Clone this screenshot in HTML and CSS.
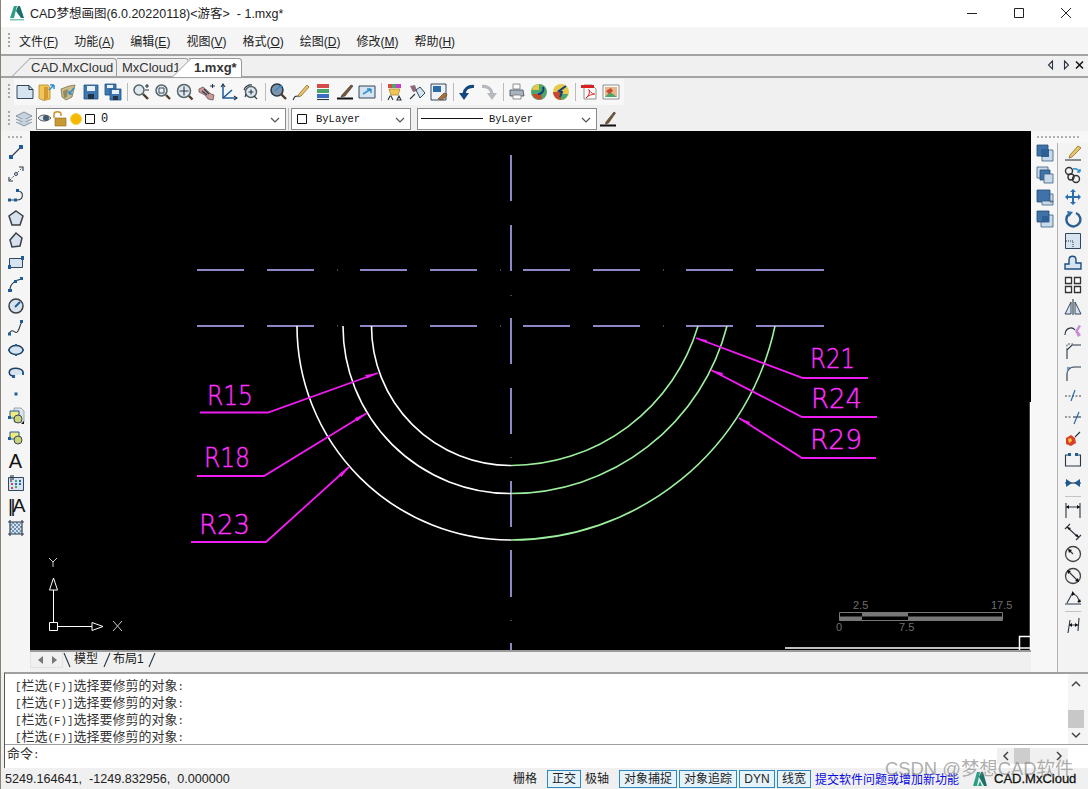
FILE: index.html
```html
<!DOCTYPE html>
<html lang="zh-CN">
<head>
<meta charset="utf-8">
<title>CAD梦想画图</title>
<link rel="stylesheet" href="styles.css">
</head>
<body>
<div class="app">
  <header class="titlebar">
    <svg class="logo" width="16" height="17" viewBox="0 0 16 17"><path class="lg" d="M1 14 5 2h3l-3 12z"/><path class="lg2" d="M7 7l2-5h2l4 12h-3z"/><path class="lg3" d="M1 15h14v1.500H1z"/></svg>
    <span class="title-text">CAD梦想画图(6.0.20220118)&lt;游客&gt;  - 1.mxg*</span>
    <div class="winbtns">
      <svg width="12" height="12" viewBox="0 0 12 12"><path class="wn" d="M1 6.500h10"/></svg>
      <svg width="12" height="12" viewBox="0 0 12 12"><path class="wn" d="M1.500 1.500h9v9h-9z"/></svg>
      <svg width="12" height="12" viewBox="0 0 12 12"><path class="wn" d="M1 1l10 10M11 1 1 11"/></svg>
    </div>
  </header>

  <nav class="menubar">
    <i class="grip-v"></i>
    <span class="menu">文件(<u>F</u>)</span><span class="menu">功能(<u>A</u>)</span><span class="menu">编辑(<u>E</u>)</span><span class="menu">视图(<u>V</u>)</span><span class="menu">格式(<u>O</u>)</span><span class="menu">绘图(<u>D</u>)</span><span class="menu">修改(<u>M</u>)</span><span class="menu">帮助(<u>H</u>)</span>
  </nav>

  <div class="tabbar">
    <div class="doc-tab t1">CAD.MxCloud</div>
    <div class="doc-tab t2">MxCloud1</div>
    <div class="doc-tab t3">1.mxg*</div>
    <div class="tab-nav">
      <svg width="38" height="12" viewBox="0 0 38 12"><path class="s" d="M6.500 2 2.500 6l4 4zM18.500 2l4 4-4 4z"/><path class="x" d="M30 2.500l7 7M37 2.500l-7 7"/></svg>
    </div>
  </div>

  <div class="toolbar row1">
    <i class="grip-v"></i>
    <div class="tools">
      <svg class="ic" viewBox="0 0 18 18"><path class="b" d="M1 2.500h12l4 4v9H1z"/><path class="s" d="M13 2.500v4h4"/></svg>
      <svg class="ic" viewBox="0 0 18 18"><path class="fo" d="M1 2h9l2 3v11l-6 1.500-5-2z"/><path class="fo2" d="M6 4h4v11l-4 2.500z"/><path class="ar" d="M11 7l5-5M16 2h-4M16 2v4"/></svg>
      <svg class="ic" viewBox="0 0 18 18"><path class="ol" d="M1 6l8-3 6-1-3 12-6 3-4-3z"/><path class="ol2" d="M3 8l5-2-1 8-3 1z"/><path class="ar" d="M14 5l-5 6M9 11h3M9 11V8"/></svg>
      <svg class="ic" viewBox="0 0 18 18"><path class="fl" d="M2 2h14v14H2z"/><path class="w" d="M5 3h8v5H5z"/><path class="bk" d="M6 11h6v5H6z"/></svg>
      <svg class="ic" viewBox="0 0 18 18"><path class="fl" d="M1 1h11v11H1z"/><path class="w" d="M3 2h6v3H3z"/><path class="fl" d="M6 6h11v11H6z"/><path class="w" d="M8 7h7v4H8z"/><path class="bk" d="M9 13h5v4H9z"/></svg>
      <i class="sep"></i>
      <svg class="ic" viewBox="0 0 18 18"><circle class="ln" cx="7" cy="7" r="5"/><path class="hd" d="M11 11l5 5"/><path class="s" d="M13 3h4M15 1v4M13 7h4"/></svg>
      <svg class="ic" viewBox="0 0 18 18"><circle class="ln" cx="7.500" cy="7.500" r="5.500"/><path class="hd" d="M12 12l4 4"/><path class="wb" d="M5 5h5v5H5z"/></svg>
      <svg class="ic" viewBox="0 0 18 18"><circle class="ln" cx="8" cy="8" r="6.500"/><path class="hd" d="M13 13l3.500 3.500"/><path class="s" d="M3.500 8h9M8 3.500v9"/></svg>
      <svg class="ic" viewBox="0 0 18 18"><path class="pk" d="M1 6l4-2 8 7 3 1-1 5-5-1-3-4-6-3z"/><path class="s" d="M4 8l5 4M6 6l5 5M12 3h5M14.500 1v4"/></svg>
      <svg class="ic" viewBox="0 0 18 18"><path class="ax" d="M3 1v14h14"/><path class="ax" d="M3 15l9-8"/><path class="s" d="M1 4l2-3 2 3M14 13l3 2-3 2"/></svg>
      <svg class="ic" viewBox="0 0 18 18"><circle class="ln" cx="9" cy="9" r="5.500"/><path class="s" d="M6.500 9h5M9 6.500v5M2 7a7 7 0 0 1 8-5M3 14l1-3M15 16l-3-3"/></svg>
      <i class="sep"></i>
      <svg class="ic" viewBox="0 0 18 18"><circle class="nv" cx="7" cy="7" r="6"/><path class="hd" d="M11 11l5 5"/><path class="ar" d="M5 8l4-4 3-1"/></svg>
      <svg class="ic" viewBox="0 0 18 18"><path class="pen" d="M7 11l8-9 2 2-8 9-3 1z"/><path class="s" d="M1 17c2-4 2-4 5-4"/></svg>
      <svg class="ic" viewBox="0 0 18 18"><path class="rr" d="M3 1h12v4H3z"/><path class="rg" d="M3 6h12v4H3z"/><path class="rb" d="M3 11h12v4H3z"/><path class="s" d="M3 16.500h12"/></svg>
      <svg class="ic" viewBox="0 0 18 18"><path class="bl" d="M1 15.500h16"/><path class="br" d="M6 12l9-10 2 1-8 10-4 1z"/></svg>
      <svg class="ic" viewBox="0 0 18 18"><path class="b" d="M1 3h16v12H1z"/><path class="ar" d="M5 11l8-5M13 6H9M13 6v4"/></svg>
      <i class="sep"></i>
      <svg class="ic" viewBox="0 0 18 18"><path class="rr" d="M2 1h4v4H2z"/><path class="rg" d="M6 1h4v4H6z"/><path class="mg" d="M10 1h5v4h-5z"/><path class="fo" d="M3 6l11 0-2 6H5z"/><path class="s" d="M2 17l2-4h1l2 4M13 13l-2 4h4z"/></svg>
      <svg class="ic" viewBox="0 0 18 18"><path class="mv" d="M2 3l5-1 2 6-4 1z"/><path class="b" d="M8 7l4-3 5 6-5 5z"/><path class="s" d="M2 16l5-5"/></svg>
      <svg class="ic" viewBox="0 0 18 18"><path class="wb" d="M1 1h15v16H1z"/><path class="nb" d="M3 3h8v6H3z"/><path class="brn" d="M8 16l6-6 3 1-1 3-4 3z"/></svg>
      <i class="sep"></i>
      <svg class="ic" viewBox="0 0 18 18"><path class="un" d="M16 3.500C10 3 6.500 6 6 11"/><path class="unh" d="M1 10h10l-5 7z"/></svg>
      <svg class="ic" viewBox="0 0 18 18"><path class="re" d="M2 3.500C8 3 11.500 6 12 11"/><path class="reh" d="M7 10h10l-5 7z"/></svg>
      <i class="sep"></i>
      <svg class="ic" viewBox="0 0 18 18"><path class="w2" d="M5 1h7v5H5z"/><path class="gr" d="M2 7h13l1 6H2z"/><path class="w2" d="M5 12h8v4H5z"/></svg>
      <svg class="ic" viewBox="0 0 18 18"><circle class="rg" cx="9" cy="9" r="8"/><path class="rr2" d="M2 11a8 8 0 0 0 10 5l-1-5z"/><path class="yl" d="M2 7a8 8 0 0 1 7-6v6z"/><path class="ar2" d="M13 4a5 5 0 0 1-5 7"/></svg>
      <svg class="ic" viewBox="0 0 18 18"><circle class="yl" cx="9" cy="9" r="8"/><path class="rr2" d="M1 9a8 8 0 0 0 8 8V9z"/><path class="rg" d="M9 17a8 8 0 0 0 7-6H9z"/><path class="ar2" d="M14 3 7 8l3 1-2 5"/></svg>
      <i class="sep"></i>
      <svg class="ic" viewBox="0 0 18 18"><path class="w2" d="M4 2h8l4 4v10H4z"/><path class="pd" d="M1 2h13v3H1z"/><path class="pdl" d="M6 15c3-2 4-6 3-8s2 4 5 4-5 0-8 4z"/></svg>
      <svg class="ic" viewBox="0 0 18 18"><path class="w2" d="M1 2h16v14H1z"/><path class="pi" d="M3 4h12v10H3z"/><path class="rg" d="M3 14l5-5 7 5z"/><path class="rr2" d="M4 8l5-3 2 3-4 3z"/></svg>
    </div>
  </div>

  <div class="toolbar row2">
    <i class="grip-v"></i>
    <svg class="ic lay" viewBox="0 0 18 18"><path class="st" d="M9 2l8 4-8 4-8-4z"/><path class="st" d="M1 9l8 4 8-4"/><path class="st" d="M1 12l8 4 8-4"/></svg>
    <div class="combo c-layer">
      <svg width="60" height="16" viewBox="0 0 60 16"><path class="ey" d="M0 7c3-4 9-4 13 0-4 4-10 4-13 0z"/><circle class="eyb" cx="8" cy="7" r="3"/><path class="lk" d="M16 7V3c0-3 7-3 7 0v2"/><path class="lkb" d="M17 7h11v8H17z"/><circle class="sun" cx="38" cy="8" r="5.500"/><path class="sq" d="M47.500 3.500h9v9h-9z"/></svg>
      <span class="combo-text t-zero">0</span>
      <svg class="chev" width="10" height="6" viewBox="0 0 10 6"><path d="M1 1l4 4 4-4"/></svg>
    </div>
    <i class="sep tall"></i>
    <div class="combo c-color">
      <svg width="12" height="12" viewBox="0 0 12 12"><path class="sq" d="M1.500 1.500h9v9h-9z"/></svg>
      <span class="combo-text t-by">ByLayer</span>
      <svg class="chev" width="10" height="6" viewBox="0 0 10 6"><path d="M1 1l4 4 4-4"/></svg>
    </div>
    <div class="combo c-line">
      <i class="hr"></i>
      <span class="combo-text t-by2">ByLayer</span>
      <svg class="chev" width="10" height="6" viewBox="0 0 10 6"><path d="M1 1l4 4 4-4"/></svg>
    </div>
    <svg class="ic lw" viewBox="0 0 18 18"><path class="bl" d="M1 15.500h16"/><path class="br" d="M7 12l8-10 1.500 1-7 10-3 1z"/></svg>
  </div>

  <main class="workspace">
    <aside class="left-bar">
      <i class="grip-h g-left"></i>
      <svg class="ic" viewBox="0 0 18 18"><path class="s" d="M4 14 14 4"/><path class="h" d="M2 12h4v4H2zM12 2h4v4h-4z"/></svg>
      <svg class="ic" viewBox="0 0 18 18"><path class="dash" d="M3 15 15 3"/><circle class="b" cx="9" cy="9" r="1.500"/><path class="s" d="M2 12v4h4M12 2h4v4"/></svg>
      <svg class="ic" viewBox="0 0 18 18"><path class="s" d="M3 13h7c7 0 7-9 1-9"/><path class="h" d="M1 11.500h3v3H1zM7 11.500h3v3H7zM9 2h3v3H9z"/></svg>
      <svg class="ic" viewBox="0 0 18 18"><path class="b2" d="M9 2l7 5-3 9H5L2 7z"/></svg>
      <svg class="ic" viewBox="0 0 18 18"><path class="b2" d="M9 2l6 5-2 8-8 1-2-7z"/></svg>
      <svg class="ic" viewBox="0 0 18 18"><path class="b" d="M2.500 5.500h13v9h-13z"/><path class="h" d="M1 12h3v4H1zM14 3h3v4h-3z"/></svg>
      <svg class="ic" viewBox="0 0 18 18"><path class="s" d="M3 15C3 9 8 5 15 4"/><path class="h" d="M1 14h4v3H1zM7 5h3v3H7zM13 2h3v3h-3z"/></svg>
      <svg class="ic" viewBox="0 0 18 18"><circle class="b2" cx="9" cy="9" r="7"/><path class="ds" d="M8 10l5-5"/></svg>
      <svg class="ic" viewBox="0 0 18 18"><path class="s" d="M2 15c4-8 6 2 9-3s1-5 4-9"/><path class="h" d="M1 13.500h3v3H1zM13 1h3v3h-3z"/></svg>
      <svg class="ic" viewBox="0 0 18 18"><ellipse class="el" cx="9" cy="9" rx="7" ry="4.500"/><path class="h" d="M8 3h2v2H8zM8 13h2v2H8zM1 8h2v2H1zM15 8h2v2h-2z"/></svg>
      <svg class="ic" viewBox="0 0 18 18"><path class="el" d="M6 13C1 12 1 7 6 5.500c5-1 11 1 10 5"/><path class="h" d="M5 12h3v3H5zM15 9h2v3h-2z"/></svg>
      <svg class="ic" viewBox="0 0 18 18"><path class="h" d="M7.500 7.500h3v3h-3z"/></svg>
      <svg class="ic" viewBox="0 0 18 18"><path class="gry" d="M7 1h7l3 3v11H7z"/><path class="yb" d="M3 4h9v7H3z"/><circle class="ci" cx="11" cy="12" r="4"/><path class="h" d="M1 9h3v3H1z"/><path class="bkf" d="M14 17l3-3v3z"/></svg>
      <svg class="ic" viewBox="0 0 18 18"><path class="yb" d="M3 3h9v7H3z"/><circle class="ci" cx="11" cy="11" r="4"/><path class="h" d="M1 8h3v3H1z"/></svg>
      <span class="ic-text">A</span>
      <svg class="ic" viewBox="0 0 18 18"><path class="b" d="M1.500 3.500h15v13h-15z"/><path class="rr" d="M4 9h2v2H4zM4 13h2v2H4z"/><path class="rg" d="M8 6h2v2H8zM8 12h2v2H8z"/><path class="nb" d="M12 6h2v2h-2zM12 9h2v2h-2zM8 9h2v2H8z"/><path class="s" d="M4 1v7M6 1v5"/></svg>
      <span class="ic-text mt">||A</span>
      <svg class="ic" viewBox="0 0 18 18"><path class="ht" d="M3 3h12v12H3z"/><path class="s" d="M3 1v16M15 1v16M1 3h16M1 15h16"/><path class="hl" d="M3 7l4-4M3 11l8-8M3 15 15 3M7 15l8-8M11 15l4-4M3 5l10 10M5 3l10 10M9 3l6 6M3 9l6 6"/></svg>
    </aside>

    <div class="center">
      <svg class="canvas" viewBox="30 131 1001 519" width="1001" height="519">
        <rect class="cad-bg" x="30" y="131" width="1001" height="519"/>
        <path class="cl" d="M197 270h47M267 270h47M360 270h47M430 270h47M523 270h47M593 270h47M686 270h47M756 270h68M197 326h47M267 326h47M360 326h47M430 326h47M523 326h47M593 326h47M686 326h47M756 326h68M511 155v46M511 225v46M511 318v46M511 388v46M511 481v46M511 550v47M511 643v7"/>
        <path class="dot" d="M337 270h1M500 270h1M663 270h1M337 326h1M500 326h1M663 326h1M511 295v1M511 457v1M511 620v1"/>
        <path class="arc-w" d="M371.500 326A139.500 139.500 0 0 0 511 465.500M343 326A167.500 167.500 0 0 0 511 493.500M297 326A214 214 0 0 0 511 540"/>
        <path class="arc-g" d="M511 465.500A195 195 0 0 0 698 326M511 493.500A223 223 0 0 0 727 326M511 540A270 270 0 0 0 775 326"/>
        <path class="ld" d="M200 412.500h68L378 373M197 476h67L367 413M191 542h75L349 467M868 378h-65L696 338M877 417h-75L711 370M876 458h-74L739 418"/>
        <path class="ah" d="M378 373l-13 2 2 3.500zM367 413l-12 5 2 3.500zM349 467l-10 7 2.500 3zM696 338l11 2-1 3zM711 370l12 3-1 3.500zM739 418l11 4-1.500 3z"/>
        <text class="cad-t" x="207" y="404.500" textLength="46" lengthAdjust="spacingAndGlyphs">R15</text>
        <text class="cad-t" x="204" y="467" textLength="46" lengthAdjust="spacingAndGlyphs">R18</text>
        <text class="cad-t" x="199" y="533.500" textLength="51" lengthAdjust="spacingAndGlyphs">R23</text>
        <text class="cad-t" x="810" y="368" textLength="45" lengthAdjust="spacingAndGlyphs">R21</text>
        <text class="cad-t" x="811" y="408" textLength="51" lengthAdjust="spacingAndGlyphs">R24</text>
        <text class="cad-t" x="810" y="449" textLength="52" lengthAdjust="spacingAndGlyphs">R29</text>
        <path class="axis" d="M49.500 622.500h8v8h-8zM53.500 622v-32M58 626.500h34M53.500 578l-4 12h8zM92 622.500l11 4-11 4z"/>
        <path class="axis ax-l" d="M49 558l4 4 4-4M53 562v5M113 621l9 10M122 621l-9 10"/>
        <path class="sb" d="M839.500 612.500h163v8h-163z"/>
        <path class="sf" d="M862 613h46v3.500h-46zM839.500 616.500H862v4h-22.500zM908 616.500h94v4h-94z"/>
        <text class="sc-t" x="853" y="609">2.5</text>
        <text class="sc-t" x="991" y="609">17.5</text>
        <text class="sc-t" x="836" y="631">0</text>
        <text class="sc-t" x="899" y="631">7.5</text>
        <path class="corner" d="M785 648h246M1019.500 650v-13.500h11v13.500M1030.500 402v236"/>
      </svg>
      <div class="sheet-tabs">
        <div class="sheet-nav">
          <svg width="30" height="12" viewBox="0 0 30 12"><path class="nav-a" d="M12 2 7 6l5 4zM21 2l5 4-5 4z"/></svg>
        </div>
        <svg class="sheet-sl" width="10" height="16" viewBox="0 0 10 16"><path class="s" d="M1 1l6 14"/></svg>
        <span class="sheet">模型</span>
        <svg class="sheet-sl sl2" width="10" height="16" viewBox="0 0 10 16"><path class="s" d="M8 1 2 15"/></svg>
        <span class="sheet">布局1</span>
        <svg class="sheet-sl sl3" width="10" height="16" viewBox="0 0 10 16"><path class="s" d="M8 1 2 15"/></svg>
      </div>
    </div>

    <aside class="right-bar">
      <i class="grip-h g-right"></i>
      <div class="right-cols">
        <div class="col-a">
          <svg class="ic" viewBox="0 0 18 18"><path class="d1" d="M1 1h11v11H1z"/><path class="d2" d="M6 6h11v11H6z"/><path class="d3" d="M5 5h8v8H5z"/></svg>
          <svg class="ic" viewBox="0 0 18 18"><path class="d2" d="M1 1h11v11H1z"/><path class="d1" d="M4 4h10v10H4z"/><path class="d2" d="M8 8h9v9H8z"/></svg>
          <svg class="ic" viewBox="0 0 18 18"><path class="d1" d="M1 2h13v12H1z"/><path class="d2" d="M6 13h11v4H6zM14 6h3v8h-3z"/></svg>
          <svg class="ic" viewBox="0 0 18 18"><path class="d2" d="M5 5h12v12H5z"/><path class="d1" d="M1 1h12v11H1z"/><path class="d3" d="M6 6h7v6H6z"/></svg>
        </div>
        <div class="col-b">
          <svg class="ic" viewBox="0 0 18 18"><path class="pen" d="M6 11l8-9 3 2-9 9-3 1z"/><path class="s" d="M1 16h16"/></svg>
          <svg class="ic" viewBox="0 0 18 18"><circle class="s2" cx="5" cy="5" r="3.500"/><circle class="s2" cx="12" cy="13" r="3.500"/><circle class="s2" cx="7" cy="11" r="3"/><path class="ar" d="M9 3c3-1 5 0 7 3M16 6V3M16 6h-3"/></svg>
          <svg class="ic" viewBox="0 0 18 18"><path class="mvb" d="M9 1l3 3h-2v4h4V6l3 3-3 3v-2h-4v4h2l-3 3-3-3h2v-4H4v2L1 9l3-3v2h4V4H6z"/></svg>
          <svg class="ic" viewBox="0 0 18 18"><path class="rot" d="M5 4a7 7 0 1 0 7-1"/><path class="mvb" d="M3 1l6 1-4 5z"/></svg>
          <svg class="ic" viewBox="0 0 18 18"><path class="b" d="M1.500 1.500h15v15h-15z"/><path class="wdash" d="M2 9h7v7"/></svg>
          <svg class="ic" viewBox="0 0 18 18"><path class="off" d="M1 15V10h4V6c0-5 7-5 7 0v3h5v6z"/></svg>
          <svg class="ic" viewBox="0 0 18 18"><path class="s3" d="M1.500 1.500h6v6h-6zM10.500 1.500h6v6h-6zM1.500 10.500h6v6h-6zM10.500 10.500h6v6h-6z"/></svg>
          <svg class="ic" viewBox="0 0 18 18"><path class="s" d="M9 1v16"/><path class="b" d="M7 4v12H1zM11 4v12h6z"/></svg>
          <svg class="ic" viewBox="0 0 18 18"><path class="s" d="M1 15c0-7 7-9 10-5"/><path class="mg2" d="M11 11l4-6 2 1-3 5 3 4-3 2z"/></svg>
          <svg class="ic" viewBox="0 0 18 18"><path class="s" d="M3 17V8l5-5h9"/><path class="dash" d="M3 8V2h6"/></svg>
          <svg class="ic" viewBox="0 0 18 18"><path class="s" d="M3 17v-7c0-4 3-7 7-7h7"/><path class="arcb" d="M3 9V3h6C6 3 4 5 3 9z"/></svg>
          <svg class="ic" viewBox="0 0 18 18"><path class="dash2" d="M1 10h16"/><path class="bl2" d="M7 15l4-11"/></svg>
          <svg class="ic" viewBox="0 0 18 18"><path class="dash2" d="M1 9h7"/><path class="s" d="M9 9h8"/><path class="bl2" d="M10 16l5-12"/></svg>
          <svg class="ic" viewBox="0 0 18 18"><path class="ex1" d="M2 8l5-3 4 3 1 5-5 3-5-2z"/><path class="ex2" d="M4 9l3-1 1 3-3 2z"/><path class="s" d="M11 7l5-5"/></svg>
          <svg class="ic" viewBox="0 0 18 18"><path class="s" d="M5 3H1.500v11h15V3H13"/><path class="h" d="M4 1h3v3H4zM11 1h3v3h-3z"/></svg>
          <svg class="ic" viewBox="0 0 18 18"><path class="s" d="M1 9h16"/><path class="bkf2" d="M2 5l6 4-6 4zM16 5l-6 4 6 4z"/></svg>
          <i class="div-h"></i>
          <svg class="ic" viewBox="0 0 18 18"><path class="s" d="M2 2v15M16 2v15M2 6h14"/><path class="bkf" d="M2 6l3-2v4zM16 6l-3-2v4z"/></svg>
          <svg class="ic" viewBox="0 0 18 18"><path class="s" d="M1 6l5-5M12 17l5-5M3 4l12 11"/><path class="bkf" d="M3 4l4 1-2 2zM15 14l-4-1 2-2z"/></svg>
          <svg class="ic" viewBox="0 0 18 18"><circle class="gc" cx="9" cy="9" r="7.500"/><path class="s" d="M9 9 5 5"/><path class="bkf" d="M4 4l4 1-3 3z"/></svg>
          <svg class="ic" viewBox="0 0 18 18"><circle class="gc" cx="9" cy="9" r="7.500"/><path class="s" d="M5 5l8 8"/><path class="bkf" d="M3 3l4 1-3 3zM15 15l-4-1 3-3z"/></svg>
          <svg class="ic" viewBox="0 0 18 18"><path class="s" d="M1 15h16M3 14 9 3M9 5c4 1 6 4 6 9"/><path class="bkf" d="M8 2l3 3-3 2zM13 13l4 0-1-3z"/></svg>
          <i class="div-h"></i>
          <svg class="ic" viewBox="0 0 18 18"><path class="s" d="M4 17 6 4M14 15l1-13M5 9h9"/><path class="bkf" d="M5 9l3-2v4zM14 9l-3-2v4z"/></svg>
        </div>
      </div>
    </aside>
  </main>

  <section class="command">
    <div class="cmd-main">
      <div class="cmd-log">
        <p class="log-line"><b>[</b>栏选<b>(F)]</b>选择要修剪的对象<b>:</b></p>
        <p class="log-line"><b>[</b>栏选<b>(F)]</b>选择要修剪的对象<b>:</b></p>
        <p class="log-line"><b>[</b>栏选<b>(F)]</b>选择要修剪的对象<b>:</b></p>
        <p class="log-line"><b>[</b>栏选<b>(F)]</b>选择要修剪的对象<b>:</b></p>
      </div>
      <div class="vscroll">
        <svg width="10" height="7" viewBox="0 0 10 7"><path class="sa" d="M1 6l4-4 4 4"/></svg>
        <i class="vthumb"></i>
        <svg width="10" height="7" viewBox="0 0 10 7"><path class="sa" d="M1 1l4 4 4-4"/></svg>
      </div>
    </div>
    <div class="cmd-input">
      <span>命令<b>:</b></span>
      <div class="hscroll">
        <svg width="7" height="10" viewBox="0 0 7 10"><path class="sa" d="M6 1 2 5l4 4"/></svg>
        <i class="hthumb"></i>
        <svg width="7" height="10" viewBox="0 0 7 10"><path class="sa" d="M1 1l4 4-4 4"/></svg>
      </div>
    </div>
  </section>

  <footer class="status">
    <span class="coords">5249.164641,&nbsp; -1249.832956,&nbsp; 0.000000</span>
    <span class="st-btn plain">栅格</span>
    <span class="st-btn on w34">正交</span>
    <span class="st-btn plain">极轴</span>
    <span class="st-btn on w58">对象捕捉</span>
    <span class="st-btn on w58">对象追踪</span>
    <span class="st-btn on w36">DYN</span>
    <span class="st-btn on w34">线宽</span>
    <a class="link">提交软件问题或增加新功能</a>
    <svg class="logo-s" width="18" height="17" viewBox="0 0 16 17"><path class="lg" d="M1 16 5 2h3L5 16z"/><path class="lg2" d="M7 7l2-5h2l4 14h-3z"/><path class="lg" d="M6 16l2-5 2 5z"/></svg>
    <span class="brand">CAD.MxCloud</span>
    <span class="watermark">CSDN @梦想CAD软件</span>
  </footer>
</div>
</body>
</html>
```
FILE: styles.css
```css
* { box-sizing: border-box; }
html, body { margin: 0; padding: 0; background: #f0f0f0; }
body { font-family: "Liberation Sans", "Noto Sans CJK SC", sans-serif; font-size: 12px; color: #1a1a1a; }
i { display: block; }
svg { display: block; flex: none; }
.app { width: 1088px; height: 789px; display: flex; flex-direction: column; border-left: 1px solid #8b8176; overflow: hidden; }

/* title */
.titlebar { height: 27px; flex: none; background: #fff; display: flex; align-items: center; padding: 0 0 3px 8px; }
.title-text { margin-left: 5px; font-size: 12.500px; color: #222; white-space: pre; }
.winbtns { margin-left: auto; display: flex; gap: 35px; padding-right: 16px; padding-top: 1px; }
.wn { fill: none; stroke: #222; stroke-width: 1; }
.lg { fill: #2f9e86; }
.lg2 { fill: #1d6f6a; }
.lg3 { fill: #7cc7b8; }

/* menu */
.menubar { height: 27px; flex: none; background: #f5f5f5; display: flex; align-items: center; padding-left: 7px; }
.grip-v { width: 2px; height: 16px; flex: none; margin-right: 1px; background: repeating-linear-gradient(to bottom, #a8a8a8 0 2px, transparent 2px 4px); }
.menu { font-size: 12px; padding: 0 8px; white-space: nowrap; color: #222; }

/* doc tabs */
.tabbar { height: 24px; flex: none; background: #f0f0f0; border-top: 2px solid #a3a3a3; border-bottom: 2px solid #a3a3a3; display: flex; align-items: flex-end; position: relative; padding-left: 28px; }
.doc-tab { height: 18px; line-height: 17px; font-size: 13px; position: relative; border-top: 1px solid #999; border-right: 1px solid #999; border-radius: 0 4px 0 0; color: #333; }
.doc-tab::before { content: ""; position: absolute; top: -1px; bottom: 0; left: -17px; width: 20px; border-top: 1px solid #999; border-left: 1px solid #999; transform: skewX(-45deg); transform-origin: bottom left; background: inherit; z-index: -1; }
.t1 { width: 88px; background: #f0f0f0; padding-left: 2px; z-index: 1; }
.t2 { width: 72px; background: #f0f0f0; padding-left: 5px; z-index: 2; }
.t2::before { display: none; }
.t3 { width: 53px; background: #fff; font-weight: 700; padding-left: 5px; z-index: 3; height: 19px; margin-bottom: -1px; }
.tab-nav { position: absolute; right: 4px; top: 3px; }
.x { fill: none; stroke: #111; stroke-width: 1.500; }

/* toolbars */
.toolbar { flex: none; display: flex; align-items: center; background: #f0f0f0; padding-left: 7px; }
.row1 { height: 28px; }
.row2 { height: 25px; }
.grip-v + .tools { margin-left: 3px; }
.tools { display: flex; align-items: center; height: 26px; background: #f7f7f7; padding-right: 2px; }
.tools .ic { margin: 0 2px; }
.ic { width: 18px; height: 18px; }
.sep { width: 1px; height: 18px; margin: 0 2.500px; background: #bbb; flex: none; }
.sep.tall { height: 22px; margin: 0 2px; }
.lay { margin-left: 4px; margin-right: 3px; }
.combo { height: 22px; background: #fff; border: 1px solid #8a8a8a; display: flex; align-items: center; position: relative; flex: none; }
.c-layer { width: 250px; padding-left: 1px; }
.c-color { width: 120px; padding-left: 4px; }
.c-line { width: 180px; padding-left: 3px; margin-left: 6px; }
.combo-text { font-family: "Liberation Mono", monospace; font-size: 10.500px; color: #111; }
.t-zero { margin-left: 3px; font-size: 12px; }
.t-by { margin-left: 8px; }
.t-by2 { margin-left: 6px; }
.hr { width: 62px; height: 1px; background: #111; flex: none; }
.chev { position: absolute; right: 5px; top: 8px; }
.chev path { fill: none; stroke: #555; stroke-width: 1.200; }
.lw { margin-left: 2px; }

/* icon parts */
.s { fill: none; stroke: #2a3644; stroke-width: 1.100; }
.s2 { fill: none; stroke: #333; stroke-width: 1.400; }
.s3 { fill: #fff; stroke: #333; stroke-width: 1.300; }
.b { fill: #d6e4f1; stroke: #33475c; stroke-width: 1; }
.b2 { fill: #d8e2ec; stroke: #3a3f48; stroke-width: 1.500; }
.h { fill: #1f5c9a; }
.hl { fill: none; stroke: #2a5f90; stroke-width: .6; }
.dash { fill: none; stroke: #555; stroke-width: 1; stroke-dasharray: 2 1.500; }
.dash2 { fill: none; stroke: #444; stroke-width: 1.100; stroke-dasharray: 2 1.500; }
.wdash { fill: none; stroke: #333; stroke-dasharray: 1 1; }
.ds { fill: none; stroke: #1f5c9a; stroke-width: 2; }
.el { fill: #d6e4f1; stroke: #1f3f5f; stroke-width: 1.500; }
.fo { fill: #f0c65a; stroke: #b08a2c; stroke-width: .8; }
.fo2 { fill: #d49a30; }
.ol { fill: #c9bb8a; stroke: #7b7350; stroke-width: .8; }
.ol2 { fill: #8f8a60; }
.ar { fill: none; stroke: #2f8fd0; stroke-width: 1.500; }
.ar2 { fill: none; stroke: #123f78; stroke-width: 2; }
.fl { fill: #3e78b2; stroke: #22517f; stroke-width: .8; }
.w { fill: #e9f1f8; }
.w2 { fill: #fbfbfb; stroke: #777; stroke-width: .8; }
.wb { fill: #eef2f6; stroke: #34495e; stroke-width: 1; }
.bk { fill: #234; }
.bkf { fill: #111; }
.bkf2 { fill: #1c5a90; }
.ln { fill: #dfe8f0; stroke: #566; stroke-width: 1.500; }
.nv { fill: #7f93a8; stroke: #2a3644; stroke-width: 1.500; }
.hd { fill: none; stroke: #4a3b2c; stroke-width: 2.400; }
.pk { fill: #c99b98; stroke: #6d5050; stroke-width: .8; }
.ax { fill: none; stroke: #1f5c9a; stroke-width: 1.500; }
.pen { fill: #e9c46a; stroke: #8a6d24; stroke-width: .8; }
.rr { fill: #d84a4a; }
.rr2 { fill: #c94a2a; }
.rg { fill: #4ca56b; }
.rb { fill: #3a6fc0; }
.yl { fill: #e6c84a; }
.mg { fill: #c83ac8; }
.mg2 { fill: #c78bd8; }
.nb { fill: #2a6aa8; }
.bl { fill: none; stroke: #111; stroke-width: 2; }
.br { fill: #7a5a34; stroke: #2a2a2a; stroke-width: .6; }
.brn { fill: #a5703a; stroke: #5c3c1c; stroke-width: .6; }
.mv { fill: #8d6a78; }
.un { fill: none; stroke: #14467f; stroke-width: 3.200; }
.unh { fill: #14467f; }
.re { fill: none; stroke: #b5b8bc; stroke-width: 3.200; }
.reh { fill: #b5b8bc; }
.gr { fill: #a9b4c0; stroke: #3f4c5a; stroke-width: .8; }
.pd { fill: #d9201f; }
.pdl { fill: none; stroke: #d9201f; stroke-width: 1; }
.pi { fill: #e8b48a; }
.st { fill: #c6d2de; stroke: #6d7d8d; stroke-width: .8; }
.ey { fill: #dce6ef; stroke: #333; stroke-width: .8; }
.eyb { fill: #445a70; }
.lk { fill: none; stroke: #c9952a; stroke-width: 1.500; }
.lkb { fill: #c99a34; stroke: #8a6a1c; stroke-width: .6; }
.sun { fill: #f6b800; stroke: #f3d54e; stroke-width: 1; }
.sq { fill: #fff; stroke: #111; stroke-width: 1; }
.gry { fill: #dde3ea; stroke: #8a96a3; stroke-width: .8; }
.yb { fill: #f3ea7d; stroke: #1f5c9a; stroke-width: 1; }
.ci { fill: #c9d47a; stroke: #3d4b5a; stroke-width: 1; }
.ht { fill: #d6e0ea; }
.ic-text { width: 18px; height: 22px; line-height: 22px; text-align: center; font-size: 20px; color: #111; }
.ic-text.mt { letter-spacing: -2.500px; white-space: nowrap; font-size: 19px; }

/* workspace */
.workspace { height: 541px; flex: none; display: flex; }
.left-bar { width: 29px; flex: none; background: #f5f5f5; display: flex; flex-direction: column; align-items: center; gap: 4px; padding-top: 3px; }
.left-bar .ic-text { margin-top: -1px; margin-bottom: -2px; }
.grip-h { height: 2px; background: repeating-linear-gradient(to right, #b0b0b0 0 2px, transparent 2px 4px); flex: none; }
.g-left { width: 16px; margin-top: 2px; margin-bottom: 1px; }
.center { width: 1001px; flex: none; display: flex; flex-direction: column; }
.canvas { flex: none; }
.cad-bg { fill: #000; }
.cl { fill: none; stroke: #8d87c6; stroke-width: 2; }
.dot { fill: none; stroke: #8d87c6; stroke-width: 1; }
.arc-w { fill: none; stroke: #fff; stroke-width: 1.600; }
.arc-g { fill: none; stroke: #9df09d; stroke-width: 1.600; }
.ld { fill: none; stroke: #f01cf0; stroke-width: 1.800; }
.ah { fill: #f01cf0; }
.cad-t { font-family: "DejaVu Sans", sans-serif; font-weight: 200; font-size: 27px; fill: #ff30ff; stroke: #ff30ff; stroke-width: .4; }
.axis { fill: none; stroke: #fff; stroke-width: 1; }
.ax-l { stroke: #ccc; }
.sb { fill: none; stroke: #777; stroke-width: 1; }
.sf { fill: #777; }
.sc-t { font-family: "Liberation Sans", sans-serif; font-size: 11px; fill: #6f6f6f; }
.corner { fill: none; stroke: #fff; stroke-width: 1.500; }
.sheet-tabs { height: 20px; flex: none; background: #f0f0f0; border-top: 2px solid #9a9a9a; display: flex; align-items: flex-start; }
.sheet-nav { width: 33px; height: 16px; display: flex; align-items: center; flex: none; border: 1px solid #e2e2e2; border-top: none; }
.nav-a { fill: #777; }
.sheet { font-size: 12px; line-height: 15px; padding: 0 1px; }
.sl2 { margin-left: 3px; }
.sl3 { margin-left: 2px; }
.right-bar { width: 57px; flex: none; background: #f7f7f7; padding-top: 5px; display: flex; flex-direction: column; }
.g-right { width: 44px; margin-left: 6px; margin-bottom: 5px; }
.right-cols { flex: 1; display: flex; }
.col-a { width: 27px; flex: none; display: flex; flex-direction: column; align-items: center; gap: 4px; padding-top: 1px; border-right: 1px solid #b4b4b4; padding-left: 1px; }
.col-b { flex: 1; background: #f3f3f3; display: flex; flex-direction: column; align-items: center; gap: 4px; padding-top: 1px; }
.div-h { width: 16px; height: 1px; background: #c4c4c4; flex: none; }
.d1 { fill: #3e72a8; stroke: #234a72; stroke-width: .8; }
.d2 { fill: #c7d9ea; stroke: #3e5f80; stroke-width: .8; }
.d3 { fill: #2b5f96; }
.mvb { fill: #2a70b0; }
.rot { fill: none; stroke: #2a5f90; stroke-width: 2.400; }
.off { fill: #d6e4f1; stroke: #1f4f7f; stroke-width: 1.400; }
.bl2 { fill: none; stroke: #2a6aa8; stroke-width: 1.200; }
.arcb { fill: #6f9fd0; }
.ex1 { fill: #d8402a; }
.ex2 { fill: #f2c83a; }
.gc { fill: #f3f3f3; stroke: #444; stroke-width: 1.300; }

/* command */
.command { height: 96px; flex: none; margin-left: 3px; background: #fff; border-top: 2px solid #a0a0a0; border-left: 1px solid #555; display: flex; flex-direction: column; }
.cmd-main { height: 71px; flex: none; display: flex; border-bottom: 1px solid #a0a0a0; }
.cmd-log { flex: 1; padding: 3px 0 0 10px; }
.log-line { margin: 0; height: 17px; line-height: 17px; font-size: 13px; color: #333; white-space: pre; }
.log-line b, .cmd-input b { font-family: "Liberation Mono", monospace; font-size: 10.830px; font-weight: 400; }
.vscroll { width: 20px; flex: none; background: #f5f5f5; display: flex; flex-direction: column; align-items: center; justify-content: space-between; padding: 6px 4px 5px 0; position: relative; }
.vthumb { position: absolute; left: 0; right: 4px; top: 36px; height: 18px; background: #c8c8c8; }
.sa { fill: none; stroke: #444; stroke-width: 1.500; }
.cmd-input { flex: 1; display: flex; align-items: flex-start; padding: 1px 0 0 2px; font-size: 13px; color: #333; justify-content: space-between; }
.cmd-input span { line-height: 16px; }
.hscroll { width: 71px; height: 16px; margin-top: 2px; margin-right: 20px; background: #f0f0f0; display: flex; align-items: center; justify-content: space-between; padding: 0 5px; position: relative; }
.hthumb { position: absolute; left: 17px; width: 16px; top: 0; bottom: 0; background: #cdcdcd; }

/* status */
.status { flex: 1; background: #f0f0f0; display: flex; align-items: center; padding-left: 4px; position: relative; }
.coords { font-size: 12.600px; color: #222; width: 508px; flex: none; white-space: pre; }
.st-btn { height: 18px; line-height: 16px; font-size: 12px; text-align: center; flex: none; color: #222; margin-right: 2px; }
.plain { width: 24px; margin-right: 10px; line-height: 18px; }
.on { background: #e5f3fb; border: 1px solid #2d89bd; }
.w34 { width: 34px; margin-right: 4px; }
.w58 { width: 58px; }
.w36 { width: 36px; }
.link { font-size: 12px; color: #0a0ae0; white-space: nowrap; width: 156px; flex: none; }
.logo-s { flex: none; }
.brand { margin-left: 5px; font-size: 13px; color: #111; -webkit-text-stroke: .3px #111; }
.watermark { position: absolute; left: 884px; top: -14px; font-size: 18.400px; color: rgba(130,130,130,.65); white-space: nowrap; }
```
